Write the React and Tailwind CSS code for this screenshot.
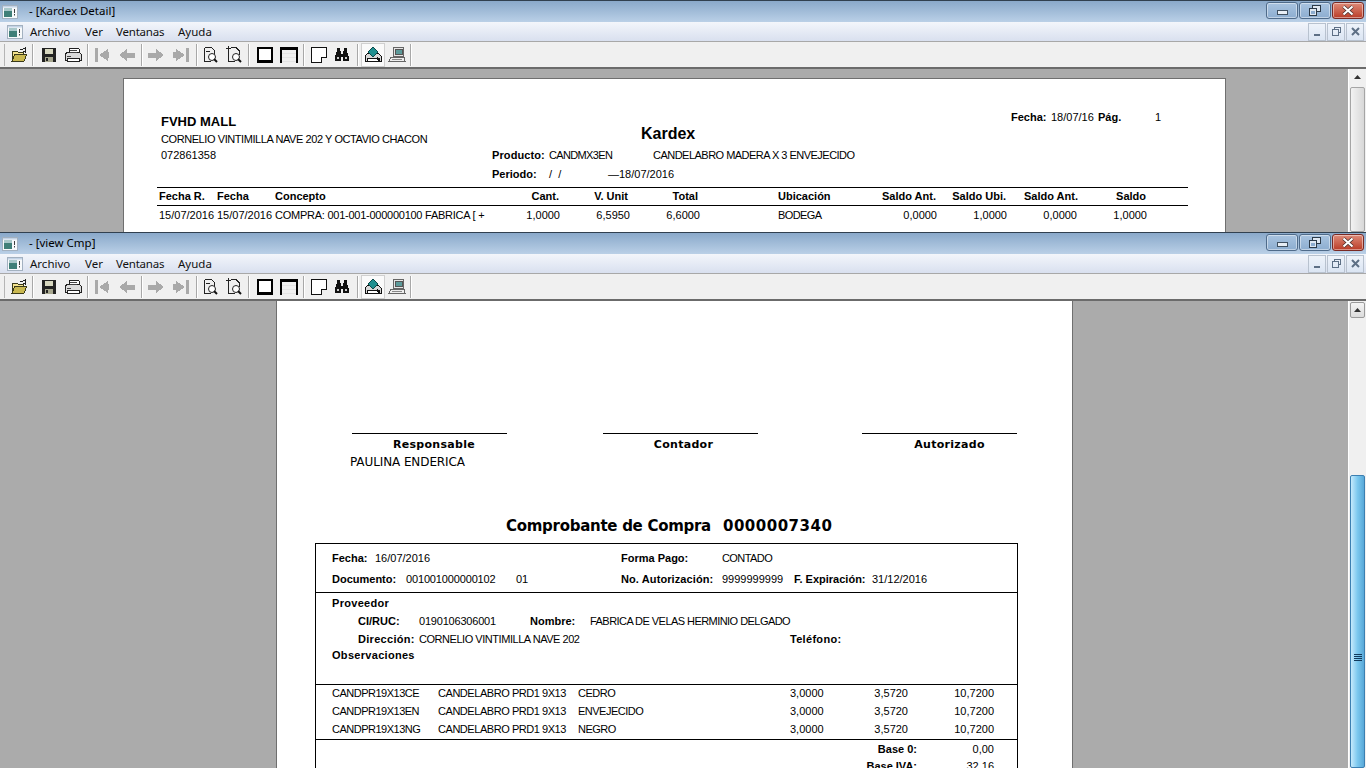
const AppIcon = ({ className = "" }) => (
  <svg width="16" height="14" viewBox="0 0 16 14" className={className}>
    <rect x="0.5" y="0.5" width="15" height="13" fill="#f7f9fb" stroke="#a3b1c0" />
    <rect x="1" y="1" width="14" height="1.500" fill="#c3d3e6" />
    <rect x="2" y="3" width="8" height="9" fill="#3f7f78" />
    <rect x="2" y="3" width="8" height="3" fill="#a9c8ca" />
    <rect x="12" y="4" width="1" height="4" fill="#404040" />
    <rect x="12" y="9" width="1" height="1.500" fill="#404040" />
  </svg>
);

const Icon = ({ children }) => (
  <svg width="18" height="18" viewBox="0 0 18 18" shapeRendering="crispEdges">{children}</svg>
);

const Btn = ({ children, active, cls = "" }) => (
  <div className={(active ? "flex w-6 h-[24px] items-center justify-center border border-[#d0d0d0] bg-[#fafafa] " : "flex w-6 h-[24px] items-center justify-center ") + cls}>
    {children}
  </div>
);

const Sep = ({ cls }) => <div className={"w-px h-[22px] bg-[#a8a8a8] border-r border-white box-content " + cls} />;

const Toolbar = () => (
  <div className="flex items-center h-[25px] bg-[#f0f0f0] border-b-2 border-[#6b6b6b] box-content">
    <div className="w-[3px] ml-[4px] h-[22px] border-l border-[#b5b5b5]" />
    <Btn>
      <Icon>
        <path d="M2 5h5l1 1h5v2H5L2 15z" fill="#f4e38e" stroke="#3a3a1a" />
        <path d="M5 8h12l-3 7H2z" fill="#c9b850" stroke="#3a3a1a" />
        <path d="M10 3h3l2-1v4l-2-1" fill="none" stroke="#222" />
      </Icon>
    </Btn>
    <Sep cls="ml-[1px] mr-[3px]" />
    <Btn>
      <Icon>
        <rect x="2" y="2" width="14" height="14" fill="#222" />
        <rect x="5" y="3" width="8" height="5" fill="#d8d8c0" />
        <rect x="5" y="11" width="8" height="5" fill="#a8a890" />
        <rect x="6" y="12" width="2" height="3" fill="#222" />
      </Icon>
    </Btn>
    <Btn>
      <Icon>
        <path d="M5 2h9l1 1v4H5z" fill="#fff" stroke="#222" />
        <path d="M1 8l3-2h11l2 2v6H1z" fill="#dcdcdc" stroke="#222" />
        <rect x="3" y="12" width="12" height="3" fill="#fff" stroke="#222" />
        <path d="M6 4h7M6 6h7M3 10h4" stroke="#444" />
      </Icon>
    </Btn>
    <Sep cls="ml-[2px] mr-[1px]" />
    <Btn>
      <Icon>
        <path d="M2 2h3v14H2zM15 3v12L6 9z" fill="#a9a9a9" />
        <path d="M11 6h5v6h-5z" fill="#a9a9a9" />
      </Icon>
    </Btn>
    <div className="w-px" />
    <Btn>
      <Icon>
        <path d="M9 3v12L1 9zM9 6.5h8v5H9z" fill="#a9a9a9" />
      </Icon>
    </Btn>
    <Sep cls="ml-[2px] mr-[1px]" />
    <Btn>
      <Icon>
        <path d="M9 3v12l8-6zM1 6.5h8v5H1z" fill="#a9a9a9" />
      </Icon>
    </Btn>
    <div className="w-[2px]" />
    <Btn>
      <Icon>
        <path d="M13 2h3v14h-3zM3 3v12l9-6z" fill="#a9a9a9" />
        <path d="M0 6h4v6H0z" fill="#a9a9a9" />
      </Icon>
    </Btn>
    <Sep cls="ml-[2px]" />
    <Btn>
      <Icon>
        <path d="M3.500 1.500h7l3 3v4M3.500 1.500v14h6" fill="none" stroke="#222" />
        <path d="M5 5h4" stroke="#222" />
        <circle cx="11" cy="11" r="3.500" fill="#fff" stroke="#222" shapeRendering="auto" />
        <path d="M13 13l3 3" stroke="#111" strokeWidth="2" shapeRendering="auto" />
      </Icon>
    </Btn>
    <Btn>
      <Icon>
        <path d="M3.500 4v11.500h6M6 1.500h5l3 3v4" fill="none" stroke="#222" />
        <path d="M3.500 0v5M1 2.500h5" stroke="#222" />
        <circle cx="11" cy="11" r="3.500" fill="#fff" stroke="#222" shapeRendering="auto" />
        <path d="M13 13l3 3" stroke="#111" strokeWidth="2" shapeRendering="auto" />
      </Icon>
    </Btn>
    <Sep cls="ml-[2px] mr-[3px]" />
    <Btn>
      <Icon>
        <path d="M1 1h16v16H1z" fill="#000" />
        <rect x="3" y="3" width="12" height="11" fill="#fff" />
      </Icon>
    </Btn>
    <Btn>
      <Icon>
        <path d="M1 17V2h16v15" fill="none" stroke="#000" strokeWidth="2" />
        <rect x="2" y="3" width="14" height="1" fill="#000" />
        <path d="M2 7h14M2 11h14M2 15h14" stroke="#e4e4e4" />
      </Icon>
    </Btn>
    <Sep cls="ml-[2px] mr-[2px]" />
    <Btn>
      <Icon>
        <path d="M1.500 1.500h15v10l-5 5h-10z" fill="#fff" stroke="#111" />
        <path d="M11.500 16.500v-5h5" fill="#eee" stroke="#111" />
      </Icon>
    </Btn>
    <Btn cls="-ml-px">
      <Icon>
        <path d="M4 2h3v3h1v3h2V5h1V2h3v3l2 6v4h-6v-4H8v4H2v-4l2-6z" fill="#111" />
        <rect x="4" y="11" width="2" height="2" fill="#ccc" />
        <rect x="12" y="11" width="2" height="2" fill="#ccc" />
      </Icon>
    </Btn>
    <Sep cls="ml-[3px] mr-[2px]" />
    <Btn active>
      <Icon>
        <path d="M1 10l3-3h10l3 3v5H1z" fill="#d8d8d8" stroke="#111" />
        <rect x="3" y="12" width="12" height="3" fill="#fff" stroke="#111" />
        <path d="M9 1l5 5-5 5-5-5z" fill="#1f8f8f" stroke="#0c4a4a" />
        <path d="M13 12l3 3" stroke="#111" strokeWidth="2" />
      </Icon>
    </Btn>
    <Btn>
      <Icon>
        <rect x="5.500" y="1.500" width="10" height="9" fill="#e6e6e6" stroke="#666" />
        <rect x="7" y="3" width="7" height="5" fill="#5c9a9a" stroke="#555" />
        <path d="M3 11h13l1 4H1z" fill="#efefef" stroke="#666" />
        <path d="M4 13h10" stroke="#888" />
      </Icon>
    </Btn>
    <Sep cls="ml-px" />
  </div>
);

const CapBtn = ({ cls, children }) => (
  <div className={"flex items-center justify-center h-[17px] rounded-[3px] border border-[#4f6b8a] shadow-[inset_0_0_0_1px_rgba(255,255,255,0.45)] " + cls}>
    {children}
  </div>
);

const TitleBar = ({ title }) => (
  <div className="flex items-center h-[22px] border-t border-[#31404f] bg-gradient-to-b from-[#8aa9ca] to-[#bad0e7]">
    <AppIcon className="ml-[2px]" />
    <span className="ml-[11px] -mt-[2px] text-[11.5px] text-black leading-none font-['Noto_Sans',sans-serif]">- [{title}]</span>
    <div className="ml-auto mr-[2px] flex gap-[1px] self-start mt-px">
      <CapBtn cls="w-[32px] bg-gradient-to-b from-[#a9c4e0] to-[#8dadd0]">
        <div className="w-[11px] h-[5px] bg-[#e8eef5] border border-[#3f4f5f] mt-[3px]" />
      </CapBtn>
      <CapBtn cls="w-[32px] bg-gradient-to-b from-[#a9c4e0] to-[#8dadd0]">
        <svg width="12" height="11" viewBox="0 0 12 11" shapeRendering="crispEdges">
          <rect x="3.500" y="0.500" width="8" height="6" fill="#dfe8f2" stroke="#2c3a48" />
          <rect x="0.500" y="3.500" width="7" height="7" fill="#dfe8f2" stroke="#2c3a48" />
          <rect x="2" y="6" width="4" height="3" fill="#8dadd0" />
        </svg>
      </CapBtn>
      <CapBtn cls="w-[32px] border-[#7a2a24] bg-gradient-to-b from-[#de8a78] to-[#b93a26]">
        <svg width="14" height="11" viewBox="0 0 14 11">
          <path d="M2.500 1.500l9 8M11.500 1.500l-9 8" stroke="#3f2a28" strokeWidth="3.500" />
          <path d="M2.500 1.500l9 8M11.500 1.500l-9 8" stroke="#fff" strokeWidth="2.200" />
        </svg>
      </CapBtn>
    </div>
  </div>
);

const MdiBtn = ({ children }) => (
  <div className="flex items-center justify-center w-[18px] h-[18px] border border-[#b8c2cf] bg-gradient-to-b from-[#eef3fa] to-[#dbe5f3]">
    {children}
  </div>
);

const MenuBar = () => (
  <div className="flex items-center h-[19px] bg-gradient-to-b from-[#f3f6fb] to-[#d9e0ef] border-b border-[#a8a8a8] box-content">
    <AppIcon className="ml-[7px]" />
    <div className="flex ml-[7px] text-[11.5px] text-[#111] leading-none font-['Noto_Sans',sans-serif]">
      <span className="w-[55px]">Archivo</span>
      <span className="w-[31px]">Ver</span>
      <span className="w-[62px] tracking-[-0.2px]">Ventanas</span>
      <span>Ayuda</span>
    </div>
    <div className="ml-auto mr-[2px] flex gap-[1px]">
      <MdiBtn><div className="w-[6px] h-[2px] bg-[#5d6f85] mt-[6px]" /></MdiBtn>
      <MdiBtn>
        <svg width="9" height="9" viewBox="0 0 9 9" shapeRendering="crispEdges">
          <path d="M2.500 2V.5h6v5H7" fill="none" stroke="#5d6f85" />
          <rect x="0.500" y="2.500" width="6" height="6" fill="none" stroke="#5d6f85" />
        </svg>
      </MdiBtn>
      <MdiBtn>
        <svg width="9" height="9" viewBox="0 0 9 9">
          <path d="M1 1l7 7M8 1L1 8" stroke="#5d6f85" strokeWidth="2" />
        </svg>
      </MdiBtn>
    </div>
  </div>
);

const ArrowUp = () => (
  <svg width="7" height="4" viewBox="0 0 7 4"><path d="M3.500 0L7 4H0z" fill="#333" /></svg>
);

const Label = ({ cls = "", children }) => <div className={"font-bold whitespace-nowrap " + cls}>{children}</div>;
const Val = ({ cls = "", children }) => <div className={"whitespace-nowrap " + cls}>{children}</div>;

const KardexPage = () => (
  <div className="ml-[123px] mt-[9px] w-[1103px] h-[200px] bg-white border border-[#6f6f6f] text-black text-[11px] leading-4 font-['Liberation_Sans',Arial,sans-serif] overflow-hidden">
    <div className="flex h-[108px]">
      <div className="w-[368px] pl-[37px] pt-[35px]">
        <div className="font-bold text-[13px]">FVHD MALL</div>
        <div className="mt-px whitespace-nowrap tracking-[-0.42px]">CORNELIO VINTIMILLA NAVE 202 Y OCTAVIO CHACON</div>
        <div>072861358</div>
      </div>
      <div className="w-[519px] pt-[47px]">
        <div className="pl-[149px] font-bold text-[16px] leading-4">Kardex</div>
        <div className="flex mt-[5px]">
          <Label cls="w-[57px] tracking-[0.1px]">Producto:</Label>
          <Val cls="w-[104px] tracking-[-0.65px]">CANDMX3EN</Val>
          <Val cls="tracking-[-0.52px]">CANDELABRO MADERA X 3 ENVEJECIDO</Val>
        </div>
        <div className="flex mt-[3px]">
          <Label cls="w-[57px]">Periodo:</Label>
          <Val cls="w-[59px]">/ &nbsp;/</Val>
          <Val>—18/07/2016</Val>
        </div>
      </div>
      <div className="pt-[30px]">
        <div className="flex">
          <Label cls="w-[40px]">Fecha:</Label>
          <Val cls="w-[47px]">18/07/16</Val>
          <Label cls="w-[53px]">Pág.</Label>
          <Val cls="w-[10px] text-right">1</Val>
        </div>
      </div>
    </div>
    <div className="ml-[33px] w-[1031px] border-t border-b border-black flex h-[19px] items-center font-bold pl-[2px] pb-[2px]">
      <div className="w-[58px]">Fecha R.</div>
      <div className="w-[58px]">Fecha</div>
      <div className="w-[100px]">Concepto</div>
      <div className="w-[184px] text-right">Cant.</div>
      <div className="w-[69px] text-right">V. Unit</div>
      <div className="w-[70px] text-right">Total</div>
      <div className="w-[80px] pl-[80px]">Ubicación</div>
      <div className="w-[158px] text-right">Saldo Ant.</div>
      <div className="w-[70px] text-right">Saldo Ubi.</div>
      <div className="w-[72px] text-right">Saldo Ant.</div>
      <div className="w-[68px] text-right">Saldo</div>
    </div>
    <div className="ml-[33px] flex h-[19px] items-center pl-[2px] pb-[2px] whitespace-nowrap">
      <div className="w-[58px]">15/07/2016</div>
      <div className="w-[58px]">15/07/2016</div>
      <div className="w-[210px] tracking-[-0.25px]">COMPRA: 001-001-000000100 FABRICA [ +</div>
      <div className="w-[75px] text-right">1,0000</div>
      <div className="w-[70px] text-right">6,5950</div>
      <div className="w-[70px] text-right">6,6000</div>
      <div className="w-[78px] pl-[78px] tracking-[-0.6px]">BODEGA</div>
      <div className="w-[159px] text-right">0,0000</div>
      <div className="w-[70px] text-right">1,0000</div>
      <div className="w-[70px] text-right">0,0000</div>
      <div className="w-[70px] text-right">1,0000</div>
    </div>
  </div>
);

const CmpPage = () => (
  <div className="ml-[276px] w-[797px] h-[468px] bg-white border-x border-[#6f6f6f] text-black overflow-hidden font-['Liberation_Sans',Arial,sans-serif] text-[11px] leading-4">
    <div className="flex pt-[132px] pl-[75px] font-['DejaVu_Sans',Verdana,sans-serif] font-bold text-[11px] tracking-[0.3px]">
      <div className="w-[155px] border-t border-black pt-[3px] text-center pl-[9px]">Responsable</div>
      <div className="w-[155px] ml-[96px] border-t border-black pt-[3px] text-center pl-[6px]">Contador</div>
      <div className="w-[155px] ml-[104px] border-t border-black pt-[3px] text-center pl-[20px]">Autorizado</div>
    </div>
    <div className="pl-[73px] mt-[1px] font-['DejaVu_Sans',Verdana,sans-serif] text-[12px] tracking-[-0.1px]">PAULINA ENDERICA</div>
    <div className="mt-[46px] ml-[229px] h-[20px] flex items-center gap-[12px] font-['DejaVu_Sans',Verdana,sans-serif] font-bold text-[15px] leading-5 whitespace-nowrap">
      <span className="tracking-[-0.28px]">Comprobante de Compra</span>
      <span className="tracking-[0.5px]">0000007340</span>
    </div>
    <div className="ml-[38px] mt-[7px] w-[703px] border border-black border-b-0">
      <div className="border-b border-black h-[49px] pl-[16px] pt-[6px]">
        <div className="flex">
          <Label cls="w-[43px]">Fecha:</Label>
          <Val cls="w-[246px]">16/07/2016</Val>
          <Label cls="w-[101px]">Forma Pago:</Label>
          <Val cls="tracking-[-0.57px]">CONTADO</Val>
        </div>
        <div className="flex mt-[5px]">
          <Label cls="w-[74px]">Documento:</Label>
          <Val cls="w-[110px] tracking-[-0.15px]">001001000000102</Val>
          <Val cls="w-[105px]">01</Val>
          <Label cls="w-[101px] tracking-[0.1px]">No. Autorización:</Label>
          <Val cls="w-[72px]">9999999999</Val>
          <Label cls="w-[78px]">F. Expiración:</Label>
          <Val>31/12/2016</Val>
        </div>
      </div>
      <div className="border-b border-black h-[92px] pl-[16px] pt-[2px]">
        <Label cls="tracking-[0.3px]">Proveedor</Label>
        <div className="flex mt-[2px] pl-[26px]">
          <Label cls="w-[61px]">CI/RUC:</Label>
          <Val cls="w-[111px] tracking-[-0.2px]">0190106306001</Val>
          <Label cls="w-[60px]">Nombre:</Label>
          <Val cls="tracking-[-0.55px]">FABRICA DE VELAS HERMINIO DELGADO</Val>
        </div>
        <div className="flex mt-[2px] pl-[26px]">
          <Label cls="w-[61px] tracking-[0.3px]">Dirección:</Label>
          <Val cls="w-[371px] tracking-[-0.46px]">CORNELIO VINTIMILLA NAVE 202</Val>
          <Label cls="tracking-[0.3px]">Teléfono:</Label>
        </div>
        <Label cls="tracking-[0.3px]">Observaciones</Label>
      </div>
      <div className="border-b border-black h-[55px] pl-[16px] flex flex-col gap-[2px]">
        {[["CANDPR19X13CE", "CEDRO"], ["CANDPR19X13EN", "ENVEJECIDO"], ["CANDPR19X13NG", "NEGRO"]].map(([c, n]) => (
          <div key={c} className="flex">
            <Val cls="w-[106px] tracking-[-0.5px]">{c}</Val>
            <Val cls="w-[140px] tracking-[-0.45px]">CANDELABRO PRD1 9X13</Val>
            <Val cls="w-[212px] tracking-[-0.5px]">{n}</Val>
            <Val cls="w-[33px] text-right">3,0000</Val>
            <Val cls="w-[85px] text-right">3,5720</Val>
            <Val cls="w-[86px] text-right">10,7200</Val>
          </div>
        ))}
      </div>
      <div className="pt-px">
        <div className="flex">
          <Label cls="w-[601px] text-right">Base 0:</Label>
          <Val cls="w-[77px] text-right">0,00</Val>
        </div>
        <div className="flex mt-px">
          <Label cls="w-[601px] text-right">Base IVA:</Label>
          <Val cls="w-[77px] text-right">32,16</Val>
        </div>
      </div>
    </div>
  </div>
);

const ScrollBtn = ({ raised }) => (
  <div className={raised
    ? "flex items-center justify-center w-[15px] h-[16px] ml-px mt-[1px] bg-gradient-to-b from-[#f4f4f4] to-[#dcdcdc] border border-[#9a9a9a] rounded-[2px]"
    : "flex items-center justify-center w-[15px] h-[16px] ml-px"}>
    <ArrowUp />
  </div>
);

const Window = ({ title, height, page, scrollbar }) => (
  <div className={"flex flex-col overflow-hidden " + height}>
    <TitleBar title={title} />
    <MenuBar />
    <Toolbar />
    <div className="flex flex-1 min-h-0 bg-[#ababab]">
      <div className="w-[1348px] min-h-0 overflow-hidden">{page}</div>
      <div className="w-[18px] bg-[#f0f0f0] border-l border-white flex flex-col">{scrollbar}</div>
    </div>
  </div>
);

export default function App() {
  return (
    <div className="w-[1366px] h-[768px] overflow-hidden bg-[#ababab]">
      <Window
        title="Kardex Detail"
        height="h-[232px]"
        page={<KardexPage />}
        scrollbar={
          <>
            <ScrollBtn />
            <div className="mt-[2px] ml-px w-[15px] flex-1 bg-gradient-to-r from-[#f2f2f2] to-[#d8d8d8] border border-[#a5a5a5] rounded-[2px]" />
          </>
        }
      />
      <Window
        title="view Cmp"
        height="h-[536px]"
        page={<CmpPage />}
        scrollbar={
          <>
            <ScrollBtn raised />
            <div className="h-[157px] shrink-0" />
            <div className="ml-px w-[15px] flex-1 flex items-start justify-center pt-[178px] bg-gradient-to-r from-[#c4eafc] via-[#7cc8ee] to-[#58a8d8] border border-[#3c7fb1] rounded-[2px]">
              <div className="w-[8px] h-[8px] flex flex-col gap-px">
                <div className="h-px bg-[#123a5c]" />
                <div className="h-px bg-[#123a5c]" />
                <div className="h-px bg-[#123a5c]" />
                <div className="h-px bg-[#123a5c]" />
              </div>
            </div>
          </>
        }
      />
    </div>
  );
}
